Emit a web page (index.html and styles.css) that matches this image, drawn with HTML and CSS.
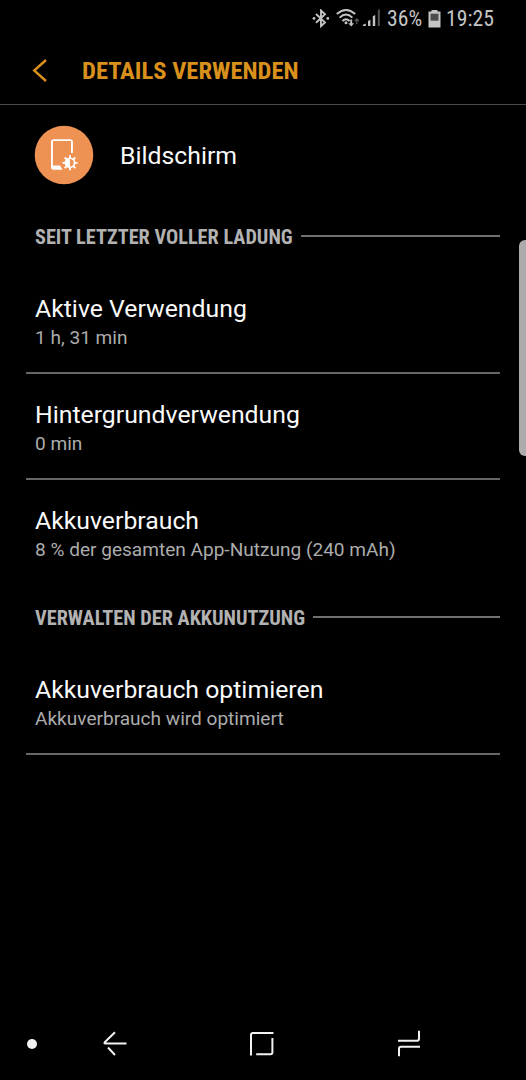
FILE: index.html
```html
<!DOCTYPE html>
<html lang="de">
<head>
    <meta charset="UTF-8">
    <meta name="viewport" content="width=device-width, initial-scale=1.0">
    <title>Details verwenden</title>
    <link rel="stylesheet" href="styles.css">
</head>
<body>
    <div class="status-bar">
        <svg class="bluetooth" width="18" height="20" viewBox="0 0 18 20">
            <path d="M4 5L13 13.4L9 17V1.5L13 5.3L4 13.8" fill="none" stroke="#c4c4c4" stroke-width="1.9"/>
            <circle cx="2" cy="9.4" r="1.4" fill="#c4c4c4"/>
            <circle cx="15.8" cy="9.4" r="1.4" fill="#c4c4c4"/>
        </svg>
        <svg class="wifi" width="25" height="20" viewBox="0 0 25 20">
            <g fill="none" stroke="#c4c4c4" stroke-width="1.9">
                <path d="M.8 5Q10-3 19.2 5"/>
                <path d="M3.6 8.6Q10 2.6 16.4 8.6"/>
                <path d="M6.4 12Q10 8.4 13.6 12"/>
                <path d="M15.2 10.5V16"/>
            </g>
            <circle cx="10" cy="13.8" r="1.5" fill="#c4c4c4"/>
            <path d="M12.3 14.2h5.8l-2.9 3.4z" fill="#c4c4c4"/>
            <path d="M20.8 15V10.5M18.8 12L20.8 10L22.8 12" fill="none" stroke="#555" stroke-width="1.3"/>
        </svg>
        <svg class="signal" width="18" height="19" viewBox="0 0 18 19">
            <path d="M0 17v-1.3L2.8 14.5V17zM5 17v-5l2.4-1.2V17zM9.8 17V7.3l2.4-1.2V17z" fill="#c4c4c4"/>
            <path d="M14.8 17V1.2L16.8 0v17z" fill="#555"/>
        </svg>
        <span class="percent">36%</span>
        <svg class="battery" width="13" height="18" viewBox="0 0 13 18">
            <path d="M3.5 0h6v1.5h3V17.5H.5V1.5h3z" fill="#c4c4c4"/>
            <path d="M2.5 3.7h8v7h-8z" fill="#4c4c4c"/>
        </svg>
        <span class="clock">19:25</span>
    </div>

    <header class="header">
        <svg class="back" width="16" height="24" viewBox="0 0 16 24">
            <path d="M14 1L2.2 11.5L14 22" fill="none" stroke="#d9901c" stroke-width="2.4"/>
        </svg>
        <h1>DETAILS VERWENDEN</h1>
    </header>

    <main class="content">
        <div class="app">
            <svg class="app-icon" width="60" height="60" viewBox="0 0 60 60">
                <circle cx="30" cy="30" r="29.3" fill="#ee9254"/>
                <path d="M38.9 28V17Q38.9 14.2 36 14.2H20Q17 14.2 17 17V42Q17 44.8 19.3 44.8H28.5L26 40.4H18.9V16.1H37V28z" fill="#fff"/>
                <g transform="translate(36 37.8)">
                    <path d="M0-7.5V7.5M-7.5 0H7.5M-5.3-5.3L5.3 5.3M-5.3 5.3L5.3-5.3" stroke="#fff" stroke-width="1.8"/>
                    <circle r="5.4" fill="#fff"/>
                    <path d="M0-3.7A3.7 3.7 0 0 1 0 3.7z" fill="#ee9254"/>
                </g>
            </svg>
            <span class="app-name">Bildschirm</span>
        </div>

        <h2 class="section-title"><span>SEIT LETZTER VOLLER LADUNG</span></h2>
        <div class="item">
            <div class="item-title">Aktive Verwendung</div>
            <div class="item-text">1 h, 31 min</div>
        </div>
        <div class="item">
            <div class="item-title">Hintergrundverwendung</div>
            <div class="item-text">0 min</div>
        </div>
        <div class="item last">
            <div class="item-title">Akkuverbrauch</div>
            <div class="item-text">8 % der gesamten App-Nutzung (240 mAh)</div>
        </div>

        <h2 class="section-title"><span>VERWALTEN DER AKKUNUTZUNG</span></h2>
        <div class="item">
            <div class="item-title">Akkuverbrauch optimieren</div>
            <div class="item-text">Akkuverbrauch wird optimiert</div>
        </div>
    </main>

    <nav class="nav-bar">
        <span class="dot"></span>
        <svg class="nav-back" width="26" height="28" viewBox="0 0 26 28">
            <path d="M13 3.2L3 13Q1.6 14.5 3.6 14.5H24.5M6 18.5L13 26" fill="none" stroke="#f2f2f2" stroke-width="2"/>
        </svg>
        <svg class="nav-home" width="26" height="28" viewBox="0 0 26 28">
            <path d="M2 26.5V6Q2 4 4 4H24.5M23.4 9V23.2Q23.4 25.2 21.4 25.2H7.2" fill="none" stroke="#f2f2f2" stroke-width="2"/>
        </svg>
        <svg class="nav-recent" width="26" height="28" viewBox="0 0 26 28">
            <path d="M2 11.8H21Q23 11.8 23 9.8V1.8M24 17.8H5Q3 17.8 3 19.8V27.3" fill="none" stroke="#f2f2f2" stroke-width="2"/>
        </svg>
    </nav>

    <div class="edge-handle"></div>
</body>
</html>
```
FILE: styles.css
```css
* {
    box-sizing: border-box;
}
body {
    position: relative;
    display: flex;
    flex-direction: column;
    width: 526px;
    height: 1080px;
    margin: 0;
    overflow: hidden;
    background: #000;
    color: #fafafa;
    font-family: Roboto, sans-serif;
}
svg {
    display: block;
    flex: none;
}
.status-bar {
    display: flex;
    align-items: center;
    height: 37px;
    padding-left: 312px;
    color: #c4c4c4;
    font-family: "Roboto Condensed", Roboto, sans-serif;
    font-size: 21.7px;
    font-stretch: 75%;
    white-space: nowrap;
}
.wifi {
    margin-left: 6px;
}
.signal {
    margin-left: 2px;
}
.percent {
    width: 35px;
    margin-left: 6px;
}
.battery {
    margin: 0 5px 0 6px;
}
.header {
    display: flex;
    align-items: center;
    height: 68px;
    padding-left: 32px;
    border-bottom: 1px solid #4a4a4a;
}
.header h1 {
    margin: 0 0 0 34px;
    color: #d9901c;
    font-family: "Roboto Condensed", Roboto, sans-serif;
    font-size: 24.6px;
    font-weight: 700;
    font-stretch: 75%;
    white-space: nowrap;
}
.content {
    flex: 1;
    padding: 0 26px;
}
.app {
    display: flex;
    align-items: center;
    height: 100px;
    padding-left: 8px;
}
.app-name {
    margin-left: 26px;
    font-size: 24.8px;
}
.section-title {
    display: flex;
    align-items: center;
    height: 63px;
    margin: 0;
    padding-left: 9px;
    color: #b2b2b2;
    font-family: "Roboto Condensed", Roboto, sans-serif;
    font-size: 20.25px;
    font-weight: 700;
    font-stretch: 75%;
    white-space: nowrap;
}
.section-title::after {
    content: "";
    flex: 1;
    height: 2px;
    margin: -1px 0 0 8px;
    background: #707070;
}
.item {
    height: 106px;
    padding: 25px 9px 0;
    border-bottom: 2px solid #666;
}
.item.last {
    border-bottom: none;
}
.item-title {
    font-size: 24.8px;
    line-height: 31px;
}
.item-text {
    color: #acacac;
    font-size: 19.07px;
    line-height: 28px;
}
.nav-bar {
    display: flex;
    align-items: center;
    height: 74px;
    padding-left: 27px;
}
.dot {
    width: 10px;
    height: 10px;
    margin-top: 1px;
    border-radius: 50%;
    background: #f2f2f2;
}
.nav-back {
    margin-left: 65px;
}
.nav-home {
    margin-left: 121px;
}
.nav-recent {
    margin-left: 121px;
}
.edge-handle {
    position: absolute;
    top: 240px;
    right: 0;
    width: 7px;
    height: 216px;
    border-radius: 6px 0 0 6px;
    background: #ababab;
}
```
